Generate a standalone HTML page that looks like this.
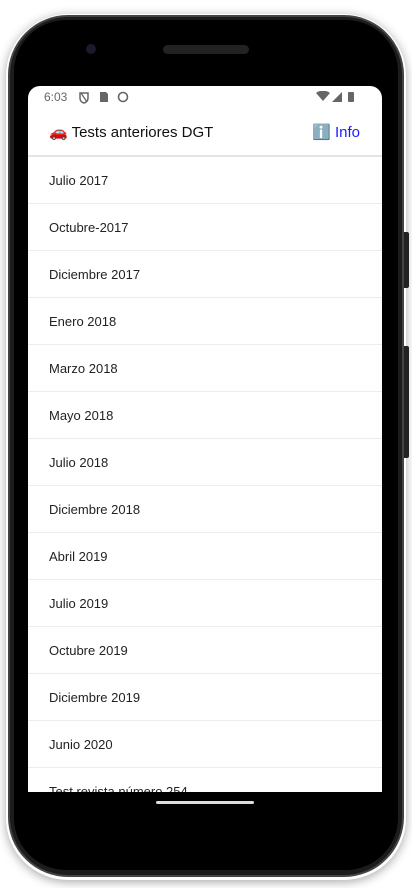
<!DOCTYPE html>
<html><head><meta charset="utf-8"><style>
*{margin:0;padding:0;box-sizing:border-box}
html,body{width:412px;height:888px;background:#fff;overflow:hidden;font-family:"Liberation Sans","DejaVu Sans",sans-serif}
.shadow{position:absolute;left:6px;top:14px;width:400px;height:866px;border-radius:62px;box-shadow:0 2px 10px rgba(0,0,0,.35)}
.phone{position:absolute;left:8px;top:15px;width:396px;height:862px;border-radius:60px;background:#1c1c1c;border:2px solid #444}
.inner{position:absolute;left:14px;top:20px;width:384px;height:850px;border-radius:52px;background:#000}
.btn{position:absolute;left:404px;width:5px;background:#222;border-radius:0 2px 2px 0}
.screen{position:absolute;left:28px;top:86px;width:354px;height:706px;background:#fff;border-radius:12px 12px 0 0;overflow:hidden}
.status{height:22px;font-size:12px;color:#666;position:relative}
.status .t{position:absolute;left:16px;top:4px}
.hdr{height:49px;border-bottom:2px solid #e4e4e4;position:relative;font-size:15px;color:#111}
.hdr .l{position:absolute;left:21px;top:15px}
.hdr .r{position:absolute;right:22px;top:15px;color:#1a1aff}
.row{height:47px;border-bottom:1px solid #ececec;font-size:13px;color:#222;padding:16px 0 0 21px}
.cam{position:absolute;left:86px;top:44px;width:10px;height:10px;border-radius:50%;background:#1a1a2a}
.spk{position:absolute;left:163px;top:45px;width:86px;height:9px;border-radius:5px;background:#222}
.home{position:absolute;left:156px;top:801px;width:98px;height:3px;border-radius:2px;background:#ddd}
</style></head><body>
<div class="shadow"></div>
<div class="phone"></div>
<div class="inner"></div>
<div class="btn" style="top:232px;height:56px"></div>
<div class="btn" style="top:346px;height:112px"></div>
<div class="cam"></div><div class="spk"></div>
<div class="screen">
<div class="status"><span class="t">6:03</span>
<svg style="position:absolute;left:50px;top:5px" width="60" height="13"><path d="M2 2h8v5q0 4-4 5q-4-1-4-5z" fill="none" stroke="#666" stroke-width="1.5"/><path d="M3 2l6 9" stroke="#666" stroke-width="1.3"/><path d="M22 1h6l2 2v8h-8z" fill="#666"/><circle cx="45" cy="6" r="4.5" fill="none" stroke="#666" stroke-width="1.6"/></svg>
<svg style="position:absolute;right:22px;top:5px" width="44" height="12"><path d="M0 2q7-5 14 0l-7 8z" fill="#666"/><path d="M16 11l10-10v10z" fill="#666"/><rect x="32" y="1" width="6" height="10" rx="1" fill="#666"/></svg>
</div>
<div class="hdr"><span class="l">🚗 Tests anteriores DGT</span><span class="r">ℹ️ Info</span></div>
<div class="row">Julio 2017</div>
<div class="row">Octubre-2017</div>
<div class="row">Diciembre 2017</div>
<div class="row">Enero 2018</div>
<div class="row">Marzo 2018</div>
<div class="row">Mayo 2018</div>
<div class="row">Julio 2018</div>
<div class="row">Diciembre 2018</div>
<div class="row">Abril 2019</div>
<div class="row">Julio 2019</div>
<div class="row">Octubre 2019</div>
<div class="row">Diciembre 2019</div>
<div class="row">Junio 2020</div>
<div class="row">Test revista número 254</div>
</div>
<div class="home"></div>
</body></html>
